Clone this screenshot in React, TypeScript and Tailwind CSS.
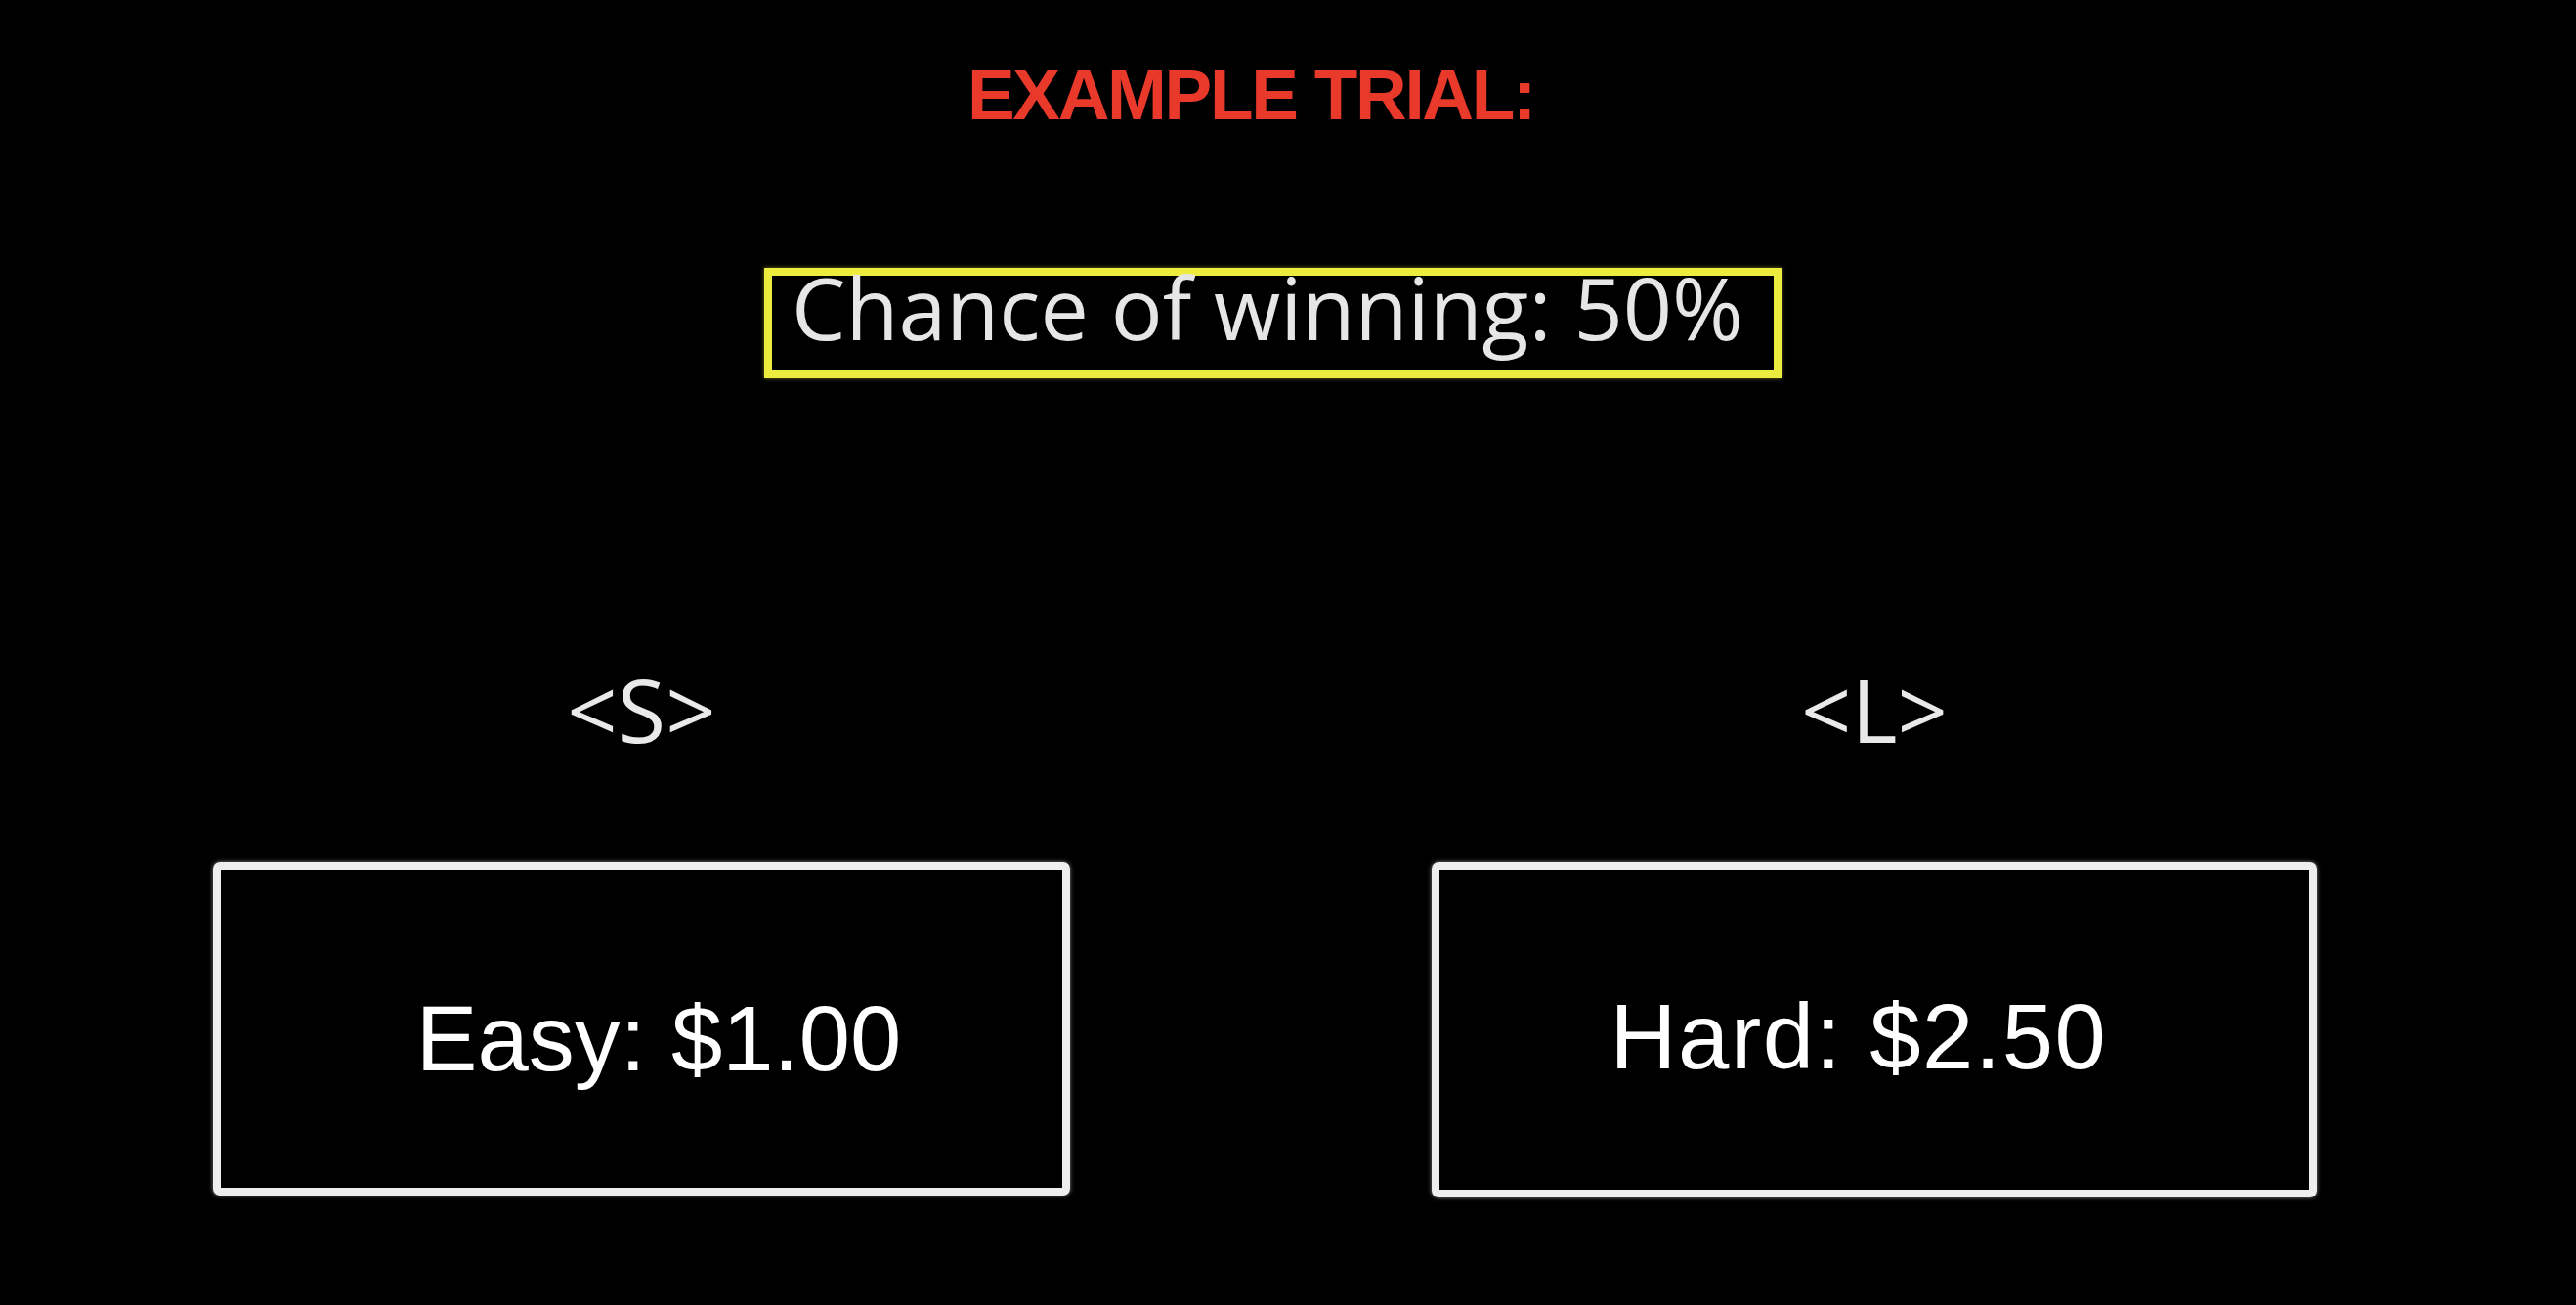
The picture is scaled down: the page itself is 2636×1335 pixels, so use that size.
const labelFont = "font-['Open_Sans',sans-serif]";
const boxFont = "font-['Liberation_Sans',Arial,sans-serif]";

function Choice({
  label,
  text,
  boxClass,
  textClass,
}: {
  label: string;
  text: string;
  boxClass: string;
  textClass: string;
}) {
  return (
    <div className="flex flex-col items-center">
      <p className={`${labelFont} text-[90px] leading-none text-[#e9e9e9]`}>{label}</p>
      <div
        className={`mt-[112px] flex items-center justify-center rounded-[7px] border-[8px] border-[#eeeeee] shadow-[0_0_4px_rgba(255,255,255,0.5)] ${boxClass}`}
      >
        <span className={`${boxFont} text-[94px] leading-none text-white ${textClass}`}>{text}</span>
      </div>
    </div>
  );
}

export default function App() {
  return (
    <main className="min-h-screen w-full bg-black">
      <div className="flex justify-center pt-[60px] pr-[76px]">
        <h1 className="font-['Liberation_Sans',Arial,sans-serif] text-[73px] font-bold leading-none tracking-[-2.3px] text-[#e8392b]">
          EXAMPLE TRIAL:
        </h1>
      </div>

      <div className="mt-[141px] flex justify-center pr-[31px]">
        <div className="h-[113px] w-[1041px] border-[8px] border-[#ecec3e] pl-[20px] shadow-[0_0_4px_rgba(236,236,62,0.5)]">
          <p className={`${labelFont} text-[88px] leading-[64px] text-[#e6e6e6]`}>
            Chance of winning: 50%
          </p>
        </div>
      </div>

      <div className="mt-[293px] flex gap-[370px] pl-[218px]">
        <Choice label="<S>" text="Easy: $1.00" boxClass="h-[341px] w-[877px]" textClass="pt-[20px] pl-[35px]" />
        <Choice
          label="<L>"
          text="Hard: $2.50"
          boxClass="h-[343px] w-[906px]"
          textClass="pt-[14px] pr-[32px] tracking-[1.6px]"
        />
      </div>
    </main>
  );
}
